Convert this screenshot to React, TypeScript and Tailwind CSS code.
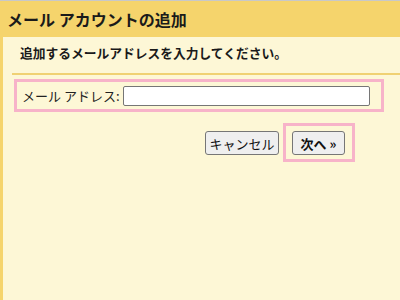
import React from "react";

export default function App() {
  const font = { fontFamily: '"Noto Sans CJK JP", "Noto Sans", sans-serif' };
  return (
    <div className="w-[400px] h-[300px] overflow-hidden flex flex-col border-t border-[#c8c8c8] bg-[#fdf7d6]" style={font}>
      <div className="h-[36px] shrink-0 bg-[#f5d46c] flex items-center pl-[7px]">
        <span className="text-[16px] font-bold text-[#1a1a1a] leading-none">メール アカウントの追加</span>
      </div>
      <div className="flex-1 flex flex-col border-l-[3px] border-[#f5d46c]">
        <div className="pl-[17px] pt-[8px] text-[12.75px] leading-[16px] font-bold text-[#1a1a1a]">
          追加するメールアドレスを入力してください。
        </div>
        <div className="ml-[9px] mt-[12px] h-[2px] bg-[#f0d173]" />
        <div className="ml-[11px] mt-[4px] w-[370px] h-[33px] border-[3px] border-[#f7b3c9] flex items-center pl-[5px]">
          <span className="w-[101px] shrink-0 text-[13px] text-[#222] leading-none">メール アドレス:</span>
          <input
            type="text"
            className="w-[247px] h-[20px] bg-white border border-[#767676] rounded-[2px] outline-none"
          />
        </div>
        <div className="flex items-start mt-[11px] ml-[202px]">
          <button className="mt-[8px] w-[74px] h-[24px] bg-[#efefef] border border-[#767676] rounded-[3px] text-[13px] text-[#111] leading-none flex items-center justify-center">
            キャンセル
          </button>
          <div className="ml-[4px] w-[72px] h-[39px] border-[3px] border-[#f7b3c9] pl-[6px] pt-[5px]">
            <button className="w-[53px] h-[24px] bg-[#efefef] border border-[#767676] rounded-[3px] text-[13px] font-bold text-[#111] leading-none flex items-center justify-center">
              次へ »
            </button>
          </div>
        </div>
      </div>
    </div>
  );
}
